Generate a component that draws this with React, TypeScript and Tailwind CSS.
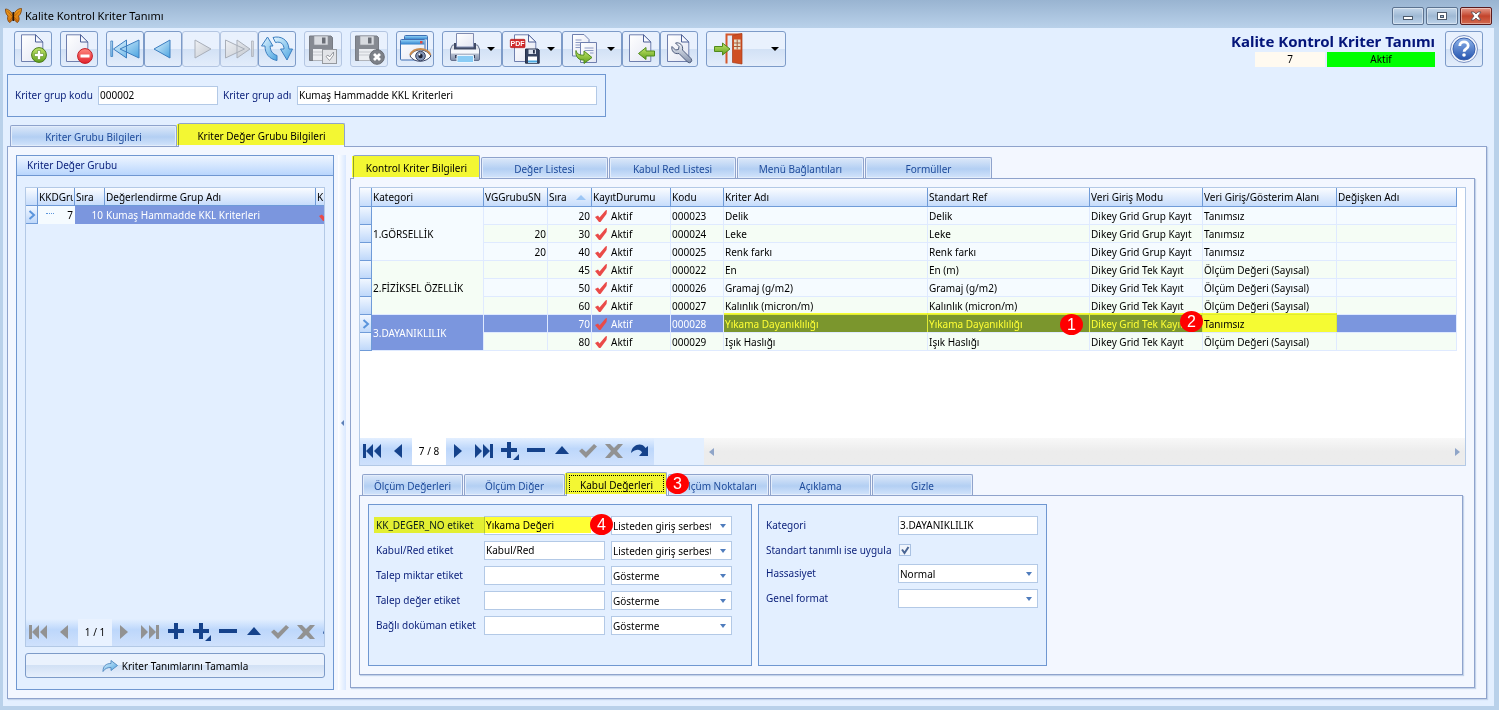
import type { ReactNode } from "react";

type Row = {
  vg: string;
  sira: string;
  kodu: string;
  ad: string;
  ref: string;
  mod: string;
  alan: string;
  group?: { name: string; span: number };
};

const GRUP = "Dikey Grid Grup Kayıt";
const TEK = "Dikey Grid Tek Kayıt";
const OLCUM = "Ölçüm Değeri (Sayısal)";

const rows: Row[] = [
  { vg: "", sira: "20", kodu: "000023", ad: "Delik", ref: "Delik", mod: GRUP, alan: "Tanımsız", group: { name: "1.GÖRSELLİK", span: 3 } },
  { vg: "20", sira: "30", kodu: "000024", ad: "Leke", ref: "Leke", mod: GRUP, alan: "Tanımsız" },
  { vg: "20", sira: "40", kodu: "000025", ad: "Renk farkı", ref: "Renk farkı", mod: GRUP, alan: "Tanımsız" },
  { vg: "", sira: "45", kodu: "000022", ad: "En", ref: "En (m)", mod: TEK, alan: OLCUM, group: { name: "2.FİZİKSEL ÖZELLİK", span: 3 } },
  { vg: "", sira: "50", kodu: "000026", ad: "Gramaj (g/m2)", ref: "Gramaj (g/m2)", mod: TEK, alan: OLCUM },
  { vg: "", sira: "60", kodu: "000027", ad: "Kalınlık (micron/m)", ref: "Kalınlık (micron/m)", mod: TEK, alan: OLCUM },
  { vg: "", sira: "70", kodu: "000028", ad: "Yıkama Dayanıklılığı", ref: "Yıkama Dayanıklılığı", mod: TEK, alan: "Tanımsız", group: { name: "3.DAYANIKLILIK", span: 2 } },
  { vg: "", sira: "80", kodu: "000029", ad: "Işık Haslığı", ref: "Işık Haslığı", mod: TEK, alan: OLCUM },
];

const SELECTED = 6;

const etiketler = [
  { id: "kkdeger", label: "KK_DEGER_NO etiket", value: "Yıkama Değeri", mode: "Listeden giriş serbest" },
  { id: "kabulred", label: "Kabul/Red etiket", value: "Kabul/Red", mode: "Listeden giriş serbest" },
  { id: "miktar", label: "Talep miktar etiket", value: "", mode: "Gösterme" },
  { id: "deger", label: "Talep değer etiket", value: "", mode: "Gösterme" },
  { id: "dokuman", label: "Bağlı doküman etiket", value: "", mode: "Gösterme" },
];

/* ---------- toolbar icons ---------- */

function Gradients() {
  return (
    <svg className="absolute h-0 w-0" aria-hidden="true">
      <defs>
        <linearGradient id="gPage" x1="0" y1="0" x2="1" y2="1">
          <stop offset="0" stopColor="#ffffff" />
          <stop offset="1" stopColor="#e3e6f3" />
        </linearGradient>
        <linearGradient id="gBlue" x1="0" y1="0" x2="1" y2="1">
          <stop offset="0" stopColor="#e4f6ff" />
          <stop offset="1" stopColor="#4aa3e0" />
        </linearGradient>
        <linearGradient id="gGray" x1="0" y1="0" x2="1" y2="1">
          <stop offset="0" stopColor="#f0f2f5" />
          <stop offset="1" stopColor="#c3c8d0" />
        </linearGradient>
        <linearGradient id="gGreen" x1="0" y1="0" x2="0" y2="1">
          <stop offset="0" stopColor="#c3e66a" />
          <stop offset="1" stopColor="#5f9f1c" />
        </linearGradient>
        <linearGradient id="gRed" x1="0" y1="0" x2="0" y2="1">
          <stop offset="0" stopColor="#ff8a80" />
          <stop offset="1" stopColor="#e2202c" />
        </linearGradient>
        <linearGradient id="gBar" x1="0" y1="0" x2="0" y2="1">
          <stop offset="0" stopColor="#8ccdf5" />
          <stop offset="1" stopColor="#2f7fcb" />
        </linearGradient>
        <linearGradient id="gSteel" x1="0" y1="0" x2="0" y2="1">
          <stop offset="0" stopColor="#f4f6fa" />
          <stop offset="1" stopColor="#8290ab" />
        </linearGradient>
        <linearGradient id="gHelp" x1="0" y1="0" x2="0" y2="1">
          <stop offset="0" stopColor="#8fb4ea" />
          <stop offset="1" stopColor="#2453ae" />
        </linearGradient>
        <linearGradient id="gWing" x1="0" y1="0" x2="0" y2="1">
          <stop offset="0" stopColor="#f0a020" />
          <stop offset="1" stopColor="#d4720c" />
        </linearGradient>
      </defs>
    </svg>
  );
}

function Svg({ children }: { children: ReactNode }) {
  return (
    <svg viewBox="0 0 30 30" className="h-[30px] w-[30px] shrink-0 overflow-visible" aria-hidden="true">
      {children}
    </svg>
  );
}

function Page({ x = 3 }: { x?: number }) {
  return (
    <g transform={`translate(${x} 0)`}>
      <path d="M.5.8h14L21.8 8v19.5H.5z" fill="url(#gPage)" stroke="#6f7fae" />
      <path d="M14.5.8V8h7.3z" fill="#f8faff" stroke="#4c5f96" strokeLinejoin="round" />
    </g>
  );
}

const NewIcon = () => (
  <Svg>
    <Page />
    <circle cx="21" cy="21" r="7.4" fill="url(#gGreen)" stroke="#4b7d1c" />
    <path d="M19.5 16.5h3v3h3v3h-3v3h-3v-3h-3v-3h3z" fill="#fff" stroke="#5e8f2a" strokeWidth=".6" />
  </Svg>
);

const DeleteIcon = () => (
  <Svg>
    <Page x={2} />
    <circle cx="21" cy="22" r="7.4" fill="url(#gRed)" stroke="#c41c24" />
    <rect x="16.5" y="20.5" width="9" height="3" fill="#fff" />
  </Svg>
);

const FirstIcon = () => (
  <Svg>
    <path d="M.8 7h1.8v15.5H.8z" fill="url(#gBlue)" stroke="#3c7ec0" strokeWidth=".8" />
    <path d="M16.5 6v18L3.5 15zM29 6v18L10 15z" fill="url(#gBlue)" stroke="#3c7ec0" strokeLinejoin="round" />
  </Svg>
);

const PrevIcon = () => (
  <Svg>
    <path d="M22 6v18L6 15z" fill="url(#gBlue)" stroke="#3c7ec0" strokeLinejoin="round" />
  </Svg>
);

const NextIcon = () => (
  <Svg>
    <path d="M9 6v18l16-9z" fill="url(#gGray)" stroke="#a9afb9" strokeLinejoin="round" />
  </Svg>
);

const LastIcon = () => (
  <Svg>
    <path d="M1.5 6v18l19-9zM13 6v18l13-9z" fill="url(#gGray)" stroke="#a9afb9" strokeLinejoin="round" />
    <path d="M27.5 7h1.8v15.5h-1.8z" fill="url(#gGray)" stroke="#a9afb9" strokeWidth=".8" />
  </Svg>
);

const RefreshIcon = () => (
  <Svg>
    <g fill="url(#gBlue)" stroke="#3c7ec0" strokeLinejoin="round">
      <path d="M5.5 3 11 12H8.2c0 5 2.3 8 6.8 9.5v5C7 25 3 19.5 3 12H-.5z" />
      <path d="M11 3.5C18.5 1.5 26.5 5.500 27 15h3.5L25 26l-6.5-11H22c0-4.5-3-8-8.5-6.5z" />
    </g>
  </Svg>
);

function GrayDisk({ children }: { children: ReactNode }) {
  return (
    <Svg>
      <path d="M1.5 2h21.5l1.5 1.5v23h-23z" fill="#868a92" stroke="#777b83" />
      <rect x="6" y="2" width="14" height="9" fill="#d8dbe0" stroke="#8f939b" strokeWidth=".6" />
      <rect x="14" y="3.5" width="3.5" height="6" fill="#6a6e76" />
      <rect x="5" y="15" width="17" height="11.5" fill="#eceef2" />
      <path d="M5 18h17M5 21h17" stroke="#c5c8ce" />
      {children}
    </Svg>
  );
}

const SaveIcon = () => (
  <GrayDisk>
    <rect x="14.5" y="15.5" width="14" height="14" fill="#e2e4e8" stroke="#95999f" />
    <path d="m18 22.500 2-1.500 1.500 2 4-5v3l-4 5.500z" fill="#fff" stroke="#84888f" strokeWidth=".8" />
  </GrayDisk>
);

const CancelIcon = () => (
  <GrayDisk>
    <circle cx="23" cy="23" r="7.3" fill="#7d8188" stroke="#696d74" />
    <path d="m20 20 6 6m0-6-6 6" stroke="#fff" strokeWidth="2.8" />
  </GrayDisk>
);

const PreviewIcon = () => (
  <Svg>
    <rect x="4.5" y="1.5" width="23" height="18" rx="1" fill="url(#gPage)" stroke="#3f6fb3" />
    <rect x="5" y="2" width="22" height="3.5" fill="url(#gBar)" />
    <rect x=".5" y="5.5" width="24.5" height="20.5" rx="1" fill="url(#gPage)" stroke="#3f6fb3" />
    <rect x="1" y="6" width="23.5" height="4.5" fill="url(#gBar)" />
    <rect x="20" y="7" width="2.5" height="2.5" fill="#e0483c" />
    <path d="M10 22c4-8 16-8 21 0-5 7-17 7-21 0z" fill="#fff" stroke="#3b4668" />
    <path d="M10 21c4-8 17-8 20.5 0" fill="none" stroke="#c98b4e" strokeWidth="1.8" />
    <circle cx="20.5" cy="22" r="4.8" fill="#8394b4" stroke="#35405f" />
    <circle cx="20.5" cy="22" r="2.2" fill="#1b2136" />
    <circle cx="19.5" cy="20.5" r=".9" fill="#fff" />
  </Svg>
);

const PrintIcon = () => (
  <Svg>
    <path d="M2.5 11h25l2 4v10q0 1.5-1.5 1.5H2Q.5 26.5.5 25V15z" fill="url(#gSteel)" stroke="#66728f" />
    <path d="M4 9h22v7H4z" fill="#414b66" />
    <path d="M6.5-.5h17V13h-17z" fill="url(#gPage)" stroke="#7f8bb0" />
    <path d="M1 15.5h28v4H1z" fill="#f6f8fc" />
    <path d="M5 21h20v3H5z" fill="#38415c" />
    <path d="M7 21.5h16.5v7H7z" fill="#8accf5" stroke="#eaf5ff" />
  </Svg>
);

const PdfIcon = () => (
  <Svg>
    <Page x={4} />
    <rect x=".3" y="5.3" width="14.7" height="8.4" rx="1" fill="#d22a2a" stroke="#a81818" strokeWidth=".6" />
    <text x="7.6" y="12.200" textAnchor="middle" fontSize="7" fontWeight="700" fill="#fff" fontFamily="Liberation Sans, sans-serif">
      PDF
    </text>
    <path d="M15.5 15H28l1.2 1.2v13H15.5z" fill="#35425f" stroke="#26304a" />
    <rect x="18.5" y="15.5" width="7.5" height="4.5" fill="#dbe2ee" />
    <rect x="23" y="16" width="1.8" height="3.5" fill="#26304a" />
    <rect x="18" y="22.5" width="9" height="6.5" fill="#fff" />
    <path d="M18 27.5h9" stroke="#4aa7e0" strokeWidth="2" />
  </Svg>
);

const CopyIcon = () => (
  <Svg>
    <path d="M2.5.5h11.5l5 5v16.5H2.5z" fill="url(#gPage)" stroke="#6f7fae" />
    <path d="M5.5 6h6M5.5 8.5h7M5.5 11h5M5.5 13.5h5" stroke="#8d9ac2" />
    <path d="M10.5 8.5h16v20h-16z" fill="url(#gPage)" stroke="#6f7fae" />
    <path d="M14.5 14h9M14.5 16.5h9M20 19h3.5" stroke="#8d9ac2" />
    <path d="M6 16.5c1 4 4 5 8 4.5v-4l8 6.5-8 6v-3.5c-5 .5-9-3-8-9.5z" fill="url(#gGreen)" stroke="#4f8a1c" strokeLinejoin="round" />
  </Svg>
);

const ImportIcon = () => (
  <Svg>
    <Page />
    <path d="m12.5 19.5 7.5-6v3.5h8.5v5H20v3.5z" fill="url(#gGreen)" stroke="#4f8a1c" strokeLinejoin="round" />
  </Svg>
);

const ToolIcon = () => (
  <Svg>
    <Page />
    <path
      d="M8 12.500 11.500 16l3-.5.5-3L11.500 9c4-1 8 2 7 7l8.500 8.500q1.500 2 0 3.500t-3.500 0L15 19.500c-5 1-8-3-7-7z"
      fill="url(#gSteel)"
      stroke="#4d5b7c"
      strokeLinejoin="round"
    />
  </Svg>
);

const ExitIcon = () => (
  <Svg>
    <path d="M12.5 29.5V.5H27v29" fill="#e3edfb" stroke="#d4572b" strokeWidth="2" />
    <path d="m18.5 1.5 9.5-2v30.5l-9.5-1.5z" fill="#cf4f24" stroke="#a83a16" strokeWidth=".7" />
    <path d="M20 5.5h6.5v10H20z" fill="#e8dcc6" />
    <path d="M23.2 5.5v10M20 9h6.5M20 12.5h6.5" stroke="#a65a38" />
    <path d="M.5 12.500h8V9l7.500 6-7.500 6v-3.500h-8z" fill="url(#gGreen)" stroke="#4f8a1c" strokeLinejoin="round" />
  </Svg>
);

const HelpIcon = () => (
  <Svg>
    <circle cx="15" cy="15" r="13.5" fill="#f4f7fd" stroke="#7b92c4" />
    <circle cx="15" cy="15" r="11" fill="url(#gHelp)" stroke="#3c62ad" />
    <path d="M10.8 12c0-5.5 8.400-5.500 8.400-.3 0 3.300-4.100 3.200-4.100 6" fill="none" stroke="#fff" strokeWidth="2.8" />
    <circle cx="15" cy="21" r="1.8" fill="#fff" />
  </Svg>
);

function Butterfly() {
  return (
    <svg viewBox="0 0 17 16" className="h-4 w-[17px]" aria-hidden="true">
      <path d="M8 7C6 3 3 1 .5 1c0 3 .5 5.500 2.500 7-1 2-.5 5 1.500 6.500C7 13.500 8 11 8.200 8.500 8.500 11 10 13.500 12.500 14.500c2-1.500 2-4.500 1-6.500 2-1.500 3-4 3-7.500C13 .5 10 3 8.500 7z" fill="url(#gWing)" stroke="#7a3c06" strokeWidth=".8" />
      <path d="M2 2.500 7 8M15 2.500 9.500 8M4.500 13 7.500 9M12.500 13 9 9" stroke="#9c4a04" strokeWidth=".6" />
      <path d="M8.300 4v9" stroke="#2b1604" strokeWidth="1.600" />
    </svg>
  );
}

function ToolButton({ label, disabled, menu, wide, children }: { label: string; disabled?: boolean; menu?: boolean; wide?: boolean; children: ReactNode }) {
  return (
    <button
      aria-label={label}
      disabled={disabled}
      className={`flex h-9 items-center rounded-[3px] border bg-linear-to-b from-[#e9f1fd] from-50% via-[#d2e1f5] via-50% to-[#e3edfb] ${
        disabled ? "border-[#b4c6e2]" : "border-[#7d9bc8]"
      } ${wide ? "w-20 justify-between pr-1.5 pl-[7px]" : menu ? "w-[60px] justify-between pr-1.5 pl-[7px]" : "w-[38px] justify-center"}`}
    >
      {children}
      {(menu || wide) && (
        <svg viewBox="0 0 8 4" className="h-1 w-2" aria-hidden="true">
          <path d="M0 0h8L4 4z" fill="#000" />
        </svg>
      )}
    </button>
  );
}

/* ---------- shared pieces ---------- */

function Marker({ n, className }: { n: number; className: string }) {
  return (
    <span
      className={`absolute z-20 flex h-[21px] w-[23px] items-center justify-center rounded-[50%] bg-[#ff0000] font-['Liberation_Sans',sans-serif] text-[16px] leading-none text-white ${className}`}
    >
      {n}
    </span>
  );
}

function Highlight({ className }: { className: string }) {
  return <span className={`pointer-events-none absolute z-10 bg-[#ffff33] mix-blend-multiply ${className}`} />;
}

function Tab({ label, active, width, focus, children }: { label: string; active?: boolean; width: string; focus?: boolean; children?: ReactNode }) {
  return (
    <button
      role="tab"
      aria-selected={!!active}
      className={`relative rounded-t-[2px] border border-b-0 border-[#8fa3cc] text-center ${width} ${
        active
          ? "z-[1] -mb-px h-6 bg-[#f3f7ff] text-black"
          : "h-[21px] bg-linear-to-b from-[#dce8f9] from-0% via-[#b3cff3] via-55% to-[#d3e4fb] pt-0.5 text-[#1e4b9b] shadow-[inset_0_0_0_1px_#e3edfb]"
      }`}
    >
      {label}
      {active && <Highlight className="-left-0.5 right-0 top-0 bottom-0.5" />}
      {focus && <span className="absolute inset-x-0.5 top-0.5 bottom-1 z-10 border border-dotted border-black" />}
      {children}
    </button>
  );
}

function Check() {
  return (
    <svg viewBox="0 0 12 12" className="inline h-3 w-3" aria-hidden="true">
      <path d="M0 7l3-1.500 1.500 2L10.500.5l1.500-.5-.5 4L5.500 12H4z" fill="#ea4a48" />
    </svg>
  );
}

const navShapes: Record<string, ReactNode> = {
  first: <path d="M0 2h3v14H0zM3 9l7-7v14zM11 9l7-7v14z" />,
  prev: <path d="M5 9l8-7v14z" />,
  next: <path d="M5 2l8 7-8 7z" />,
  last: <path d="M0 2l7 7-7 7zM8 2l7 7-7 7zM15 2h3v14h-3z" />,
  add: <path d="M7 0h4v6h6v4h-6v6H7v-6H1V6h6z" />,
  append: <path d="M6 0h4v6h6v4h-6v6H6v-6H0V6h6zM18 12v6h-6z" />,
  remove: <path d="M0 6h18v4H0z" />,
  edit: <path d="M9 4l7 8H2z" />,
  post: <path d="M0 9l3-2.500L7 10l8-8 3 2.500L7 16z" />,
  cancel: <path d="M0 2h5l4 4 4-4h5l-6 7 6 7h-5l-4-4-4 4H0l6-7z" />,
  refresh: <path d="M0 11C1 2 11 0 14.500 6L17 4v10H8l3-3.500C9 6.500 4.500 7 0 11z" />,
};

function NavButton({ kind, disabled }: { kind: string; disabled?: boolean }) {
  return (
    <button aria-label={kind} disabled={disabled} className="flex h-full w-[26px] shrink-0 items-center justify-center pr-0.5 pb-0.5">
      <svg viewBox="0 0 18 18" className={`h-[18px] w-[18px] ${disabled ? "fill-[#929292]" : "fill-[#15428b]"}`}>
        {navShapes[kind]}
      </svg>
    </button>
  );
}

const navBg = "bg-linear-to-b from-[#e3efff] to-[#cfe1fc] from-0% via-[#bdd7fb] via-40%";
const headCell =
  "border-r border-b border-[#6f9bd8] bg-linear-to-b from-[#fafcff] to-[#c6dcfb] px-px text-left font-normal whitespace-nowrap overflow-hidden";
const indicator = "border-r border-b border-[#6f9bd8] bg-linear-to-b from-[#f1f7ff] to-[#bfd8fa] p-0";

function Arrow() {
  return (
    <svg viewBox="0 0 8 10" className="mx-auto h-2.5 w-2" aria-hidden="true">
      <path d="m1.5 1 4.5 4-4.5 4" fill="none" stroke="#5b95dc" strokeWidth="2" />
    </svg>
  );
}

function Select({ id, value, width }: { id: string; value: string; width: string }) {
  return (
    <div className={`relative ${width}`}>
      <select id={id} aria-label={id} defaultValue={value} className="block h-[19px] w-full appearance-none overflow-hidden border border-[#b3c9e6] bg-white pr-5 pl-px text-black outline-none">
        <option>{value}</option>
      </select>
      <svg viewBox="0 0 6 4" className="pointer-events-none absolute top-2 right-1.5 h-1 w-1.5" aria-hidden="true">
        <path d="M0 0h6L3 4z" fill="#4f7cbc" />
      </svg>
    </div>
  );
}

const field = "block h-[19px] border border-[#b3c9e6] bg-white px-px pb-0.5 text-black outline-none";

/* ---------- sections ---------- */

function TitleBar() {
  const btn = "flex h-[18px] w-8 items-center justify-center rounded-[2px] border shadow-[inset_0_0_0_1px_rgba(255,255,255,0.4)]";
  return (
    <header className="flex h-7 items-center justify-between bg-linear-to-b from-[#99b4d1] to-[#b9d1ea] pt-1 pr-[7px] pl-[5px]">
      <div className="flex items-center gap-[3px] font-['Noto_Sans',sans-serif] text-[11px] text-black">
        <Butterfly />
        <h1>Kalite Kontrol Kriter Tanımı</h1>
      </div>
      <div className="flex gap-0.5">
        <button aria-label="Simge durumuna küçült" className={`${btn} border-[#5c7390] bg-linear-to-b from-[#c5d7ea] via-[#9fb9d4] via-50% to-[#bdd3ea]`}>
          <span className="mt-1 h-1 w-2.5 border border-[#4d5a6b] bg-white" />
        </button>
        <button aria-label="Ekranı kapla" className={`${btn} border-[#5c7390] bg-linear-to-b from-[#c5d7ea] via-[#9fb9d4] via-50% to-[#bdd3ea]`}>
          <span className="flex h-2 w-2.5 items-center justify-center border border-[#4d5a6b] bg-white">
            <span className="h-[3px] w-1 border border-[#4d5a6b] bg-[#9fb9d4]" />
          </span>
        </button>
        <button aria-label="Kapat" className={`${btn} border-[#5a1a1c] bg-linear-to-b from-[#e39a8c] via-[#c3432b] via-50% to-[#d2694f]`}>
          <svg viewBox="0 0 12 10" className="h-2.5 w-3">
            <path d="M1 1h3l2 2 2-2h3L8 5l3 4H8L6 7 4 9H1l3-4z" fill="#fff" stroke="#5b4a52" strokeWidth=".8" />
          </svg>
        </button>
      </div>
    </header>
  );
}

function Toolbar() {
  return (
    <div className="flex justify-between px-[11px]">
      <div className="flex gap-2">
        <ToolButton label="Yeni"><NewIcon /></ToolButton>
        <ToolButton label="Sil"><DeleteIcon /></ToolButton>
        <div className="flex">
          <ToolButton label="İlk"><FirstIcon /></ToolButton>
          <ToolButton label="Önceki"><PrevIcon /></ToolButton>
          <ToolButton label="Sonraki" disabled><NextIcon /></ToolButton>
          <ToolButton label="Son" disabled><LastIcon /></ToolButton>
          <ToolButton label="Yenile"><RefreshIcon /></ToolButton>
        </div>
        <ToolButton label="Kaydet" disabled><SaveIcon /></ToolButton>
        <ToolButton label="Vazgeç" disabled><CancelIcon /></ToolButton>
        <ToolButton label="Önizleme"><PreviewIcon /></ToolButton>
        <div className="flex">
          <ToolButton label="Yazdır" menu><PrintIcon /></ToolButton>
          <ToolButton label="PDF kaydet" menu><PdfIcon /></ToolButton>
          <ToolButton label="Kopyala" menu><CopyIcon /></ToolButton>
          <ToolButton label="İçeri al"><ImportIcon /></ToolButton>
          <ToolButton label="Ayarlar"><ToolIcon /></ToolButton>
        </div>
        <ToolButton label="Çıkış" wide><ExitIcon /></ToolButton>
      </div>
      <div className="flex gap-2.5">
        <div className="flex flex-col items-end text-center">
          <h2 className="h-[21px] font-['Noto_Sans',sans-serif] text-[15px] leading-[21px] font-bold text-[#04157a]">Kalite Kontrol Kriter Tanımı</h2>
          <div className="flex gap-0.5 leading-[15px] text-black">
            <span className="w-[70px] bg-[#fffaf0]">7</span>
            <span className="w-[108px] bg-[#00ff00]">Aktif</span>
          </div>
        </div>
        <ToolButton label="Yardım"><HelpIcon /></ToolButton>
      </div>
    </div>
  );
}

function LeftGroup() {
  return (
    <section className="flex w-[318px] flex-col border border-[#6f97d1] bg-[#e3efff]">
      <h3 className="h-5 border-b border-[#6f97d1] bg-linear-to-b from-[#eef5ff] to-[#b9d6fd] pl-2.5 leading-[19px]">Kriter Değer Grubu</h3>
      <div className="mx-2 mt-[11px] flex flex-1 flex-col overflow-hidden border border-[#b3c9e6]">
        <table className="w-full table-fixed border-separate border-spacing-0 text-black">
          <colgroup>
            <col className="w-3" />
            <col className="w-[37px]" />
            <col className="w-[30px]" />
            <col />
            <col className="w-2" />
          </colgroup>
          <thead>
            <tr className="h-[18px]">
              <th className={headCell} />
              <th className={headCell}>
                <span className="block overflow-hidden">KKDGru</span>
              </th>
              <th className={headCell}>Sıra</th>
              <th className={headCell}>Değerlendirme Grup Adı</th>
              <th className="overflow-hidden border-b border-[#6f9bd8] bg-linear-to-b from-[#fafcff] to-[#c6dcfb] px-px text-left font-normal">K</th>
            </tr>
          </thead>
          <tbody>
            <tr className="h-[18px]">
              <td className={indicator}><Arrow /></td>
              <td className="bg-[#f5fbff] px-0.5">
                <div className="flex items-center justify-between pl-1.5">
                  <span className="mb-1 w-2 border-t border-dotted border-[#5b95dc]" />7
                </div>
              </td>
              <td className="bg-[#7b96de] px-0.5 text-right text-white">10</td>
              <td className="bg-[#7b96de] px-px text-white">Kumaş Hammadde KKL Kriterleri</td>
              <td className="overflow-hidden bg-[#7b96de] p-0 pl-[3px] leading-none"><Check /></td>
            </tr>
          </tbody>
        </table>
        <div className={`mt-auto flex h-[27px] overflow-hidden ${navBg}`}>
          <NavButton kind="first" disabled />
          <NavButton kind="prev" disabled />
          <span className="w-[34px] shrink-0 bg-[#e9f2ff] text-center leading-[26px] text-black">1 / 1</span>
          <NavButton kind="next" disabled />
          <NavButton kind="last" disabled />
          <NavButton kind="add" />
          <NavButton kind="append" />
          <NavButton kind="remove" />
          <NavButton kind="edit" />
          <NavButton kind="post" disabled />
          <NavButton kind="cancel" disabled />
          <NavButton kind="refresh" />
        </div>
      </div>
      <button className="mx-2 mt-1.5 mb-[11px] flex h-[25px] items-center justify-center gap-1 rounded-[3px] border border-[#7d9bc8] bg-linear-to-b from-[#eaf2fd] from-50% via-[#d2e1f5] via-50% to-[#e6effc] text-black">
        <svg viewBox="0 0 16 12" className="h-3 w-4" aria-hidden="true">
          <path d="M1 11.500C1 6 4 3.500 9 3.500V.5l6.500 5-6.500 5v-3c-4 0-6 1-8 4z" fill="url(#gBlue)" stroke="#4f86bd" strokeWidth=".9" />
        </svg>
        Kriter Tanımlarını Tamamla
      </button>
    </section>
  );
}

function CriteriaGrid() {
  return (
    <div className="flex min-h-[278px] flex-1 flex-col border border-[#b3c9e6] bg-white">
      <div className="pr-2">
        <table className="w-full table-fixed border-separate border-spacing-0 whitespace-nowrap text-black">
          <colgroup>
            <col className="w-3" />
            <col className="w-28" />
            <col className="w-16" />
            <col className="w-11" />
            <col className="w-[79px]" />
            <col className="w-[53px]" />
            <col className="w-51" />
            <col className="w-[162px]" />
            <col className="w-[113px]" />
            <col className="w-[134px]" />
            <col />
          </colgroup>
          <thead>
            <tr className="h-[19px]">
              <th className={headCell} />
              <th className={headCell}>Kategori</th>
              <th className={headCell}>VGGrubuSN</th>
              <th className={headCell}>
                <span className="flex items-center justify-between pr-1">
                  Sıra
                  <svg viewBox="0 0 10 5" className="h-[5px] w-2.5"><path d="M0 5h10L5 0z" fill="#9cc6f5" /></svg>
                </span>
              </th>
              <th className={headCell}>KayıtDurumu</th>
              <th className={headCell}>Kodu</th>
              <th className={headCell}>Kriter Adı</th>
              <th className={headCell}>Standart Ref</th>
              <th className={headCell}>Veri Giriş Modu</th>
              <th className={headCell}>Veri Giriş/Gösterim Alanı</th>
              <th className={headCell}>Değişken Adı</th>
            </tr>
          </thead>
          <tbody>
            {rows.map((r, i) => {
              const sel = i === SELECTED;
              const light = i % 2 ? "bg-[#f5fdf5]" : "bg-[#f5fbff]";
              const bg = sel ? "bg-[#7b96de] text-white" : light;
              const cell = `relative border-r border-b border-[#dfeaff] px-px ${bg}`;
              return (
                <tr key={r.kodu} className="h-[18px]">
                  <td className={indicator}>{sel && <Arrow />}</td>
                  {r.group && (
                    <td rowSpan={r.group.span} className={cell}>{r.group.name}</td>
                  )}
                  <td className={`${cell} text-right`}>{r.vg}</td>
                  <td className={`${cell} text-right`}>{r.sira}</td>
                  <td className={cell}>
                    <span className="flex items-center gap-1 pl-0.5"><Check />Aktif</span>
                  </td>
                  <td className={cell}>{r.kodu}</td>
                  <td className={cell}>
                    {r.ad}
                    {sel && <Highlight className="-top-0.5 left-0 h-[19px] w-[613px]" />}
                  </td>
                  <td className={cell}>
                    {r.ref}
                    {sel && <Marker n={1} className="-top-px right-1.5" />}
                  </td>
                  <td className={cell}>
                    {r.mod}
                    {sel && <Marker n={2} className="-top-1 -right-px" />}
                  </td>
                  <td className={`relative border-r border-b border-[#dfeaff] px-px ${sel ? "bg-[#f5fbff]" : light}`}>{r.alan}</td>
                  <td className={cell} />
                </tr>
              );
            })}
          </tbody>
        </table>
      </div>
      <div className="mt-auto flex h-[27px] bg-[#e3efff]">
        <div className={`flex ${navBg}`}>
          <NavButton kind="first" />
          <NavButton kind="prev" />
          <span className="w-[34px] shrink-0 bg-white text-center leading-[26px] text-black">7 / 8</span>
          <NavButton kind="next" />
          <NavButton kind="last" />
          <NavButton kind="append" />
          <NavButton kind="remove" />
          <NavButton kind="edit" />
          <NavButton kind="post" disabled />
          <NavButton kind="cancel" disabled />
          <NavButton kind="refresh" />
        </div>
        <div className="ml-[50px] flex flex-1 items-center justify-between bg-linear-to-b from-[#f8f8f8] to-[#ececec] to-50% px-[5px]">
          <svg viewBox="0 0 5 8" className="h-2 w-[5px]"><path d="M5 0v8L0 4z" fill="#8fa5c8" /></svg>
          <svg viewBox="0 0 5 8" className="h-2 w-[5px]"><path d="M0 0v8l5-4z" fill="#8fa5c8" /></svg>
        </div>
      </div>
    </div>
  );
}

function DetailForms() {
  return (
    <div className="mr-[3px] border border-[#8fa3cc] p-2 shadow-[1px_1px_1px_#c3d3ea]">
      <div className="flex gap-1.5">
        <section className="flex h-[162px] w-96 flex-col gap-1.5 border border-[#6f97d1] bg-[#e3efff] pt-[11px] pl-[7px]">
          {etiketler.map((e, i) => (
            <div key={e.id} className="relative flex">
              <label htmlFor={e.id} className="w-27 leading-[18px]">{e.label}</label>
              <div className="relative mr-1.5">
                <input id={e.id} defaultValue={e.value} className={`${field} w-[121px]`} />
                {i === 0 && <Marker n={4} className="-top-0.5 -right-2" />}
              </div>
              <Select id={`${e.id}-mod`} value={e.mode} width="w-[121px]" />
              {i === 0 && <Highlight className="top-px -left-0.5 h-4 w-[217px]" />}
            </div>
          ))}
        </section>
        <section className="flex h-[162px] w-[289px] flex-col gap-1.5 border border-[#6f97d1] bg-[#e3efff] pt-[11px] pl-[7px]">
          <div className="flex">
            <label htmlFor="kategori" className="w-33 leading-[18px]">Kategori</label>
            <input id="kategori" defaultValue="3.DAYANIKLILIK" className={`${field} w-35`} />
          </div>
          <div className="flex h-[17px] items-center">
            <label htmlFor="uygula" className="w-33 whitespace-nowrap">Standart tanımlı ise uygula</label>
            <span className="relative ml-px flex">
              <input id="uygula" type="checkbox" defaultChecked className="h-3 w-3 appearance-none border border-[#a9c1e2] bg-[#f0f5fc]" />
              <svg viewBox="0 0 12 12" className="pointer-events-none absolute h-3 w-3">
                <path d="M3 5.500l2.500 3.500L9.500 3" fill="none" stroke="#4a6593" strokeWidth="2" />
              </svg>
            </span>
          </div>
          <div className="flex">
            <label htmlFor="hassasiyet" className="w-33 leading-[18px]">Hassasiyet</label>
            <Select id="hassasiyet" value="Normal" width="w-35" />
          </div>
          <div className="flex">
            <label htmlFor="format" className="w-33 leading-[18px]">Genel format</label>
            <Select id="format" value="" width="w-35" />
          </div>
        </section>
      </div>
    </div>
  );
}

export default function App() {
  return (
    <div className="flex min-h-screen flex-col bg-[#b9d1ea] font-['Noto_Sans',sans-serif] text-[10px] leading-[14px] text-[#0a1f7a]">
      <Gradients />
      <TitleBar />
      <main className="mr-[5px] mb-1 ml-[3px] flex flex-1 flex-col bg-[#e3efff] pt-[3px]">
        <Toolbar />
        <form className="mt-[7px] ml-1 flex h-[43px] w-[599px] items-center border border-[#6f97d1] pl-[7px]">
          <label htmlFor="grup-kodu" className="w-[83px] pb-0.5">Kriter grup kodu</label>
          <input id="grup-kodu" defaultValue="000002" className={`${field} w-30`} />
          <label htmlFor="grup-adi" className="ml-[5px] w-[74px] pb-0.5">Kriter grup adı</label>
          <input id="grup-adi" defaultValue="Kumaş Hammadde KKL Kriterleri" className={`${field} w-75`} />
        </form>

        <div role="tablist" className="mt-1.5 ml-[7px] flex h-[23px] items-end gap-px">
          <Tab label="Kriter Grubu Bilgileri" width="w-[167px]" />
          <Tab label="Kriter Değer Grubu Bilgileri" width="w-[167px]" active />
        </div>
        <div className="mr-[7px] mb-[7px] ml-1 flex flex-1 border border-[#8fa3cc] bg-[#f3f7ff] pt-2 pr-[11px] pb-2 pl-2 shadow-[1px_1px_1px_#c3d3ea]">
          <LeftGroup />
          <div className="flex w-4 items-center justify-center border-x-4 border-[#f3f7ff] bg-linear-to-r from-white to-[#d9e8ff]">
            <svg viewBox="0 0 3 6" className="h-1.5 w-[3px]"><path d="M3 0v6L0 3z" fill="#5c7fb8" /></svg>
          </div>
          <div className="mb-0.5 flex min-w-0 flex-1 flex-col">
            <div role="tablist" className="ml-[3px] flex h-[23px] items-end gap-px">
              <Tab label="Kontrol Kriter Bilgileri" width="w-[127px]" active />
              <Tab label="Değer Listesi" width="w-[127px]" />
              <Tab label="Kabul Red Listesi" width="w-[127px]" />
              <Tab label="Menü Bağlantıları" width="w-[127px]" />
              <Tab label="Formüller" width="w-[127px]" />
            </div>
            <div className="flex flex-1 flex-col border border-[#8fa3cc] pt-2 pr-2 pb-3 pl-2 shadow-[1px_1px_1px_#c3d3ea]">
              <CriteriaGrid />
              <div role="tablist" className="mt-1.5 ml-[3px] flex h-[23px] items-end gap-px">
                <Tab label="Ölçüm Değerleri" width="w-[101px]" />
                <Tab label="Ölçüm Diğer" width="w-[101px]" />
                <Tab label="Kabul Değerleri" width="w-[101px]" active focus />
                <Tab label="Ölçüm Noktaları" width="w-[101px]">
                  <Marker n={3} className="-top-0.5 -left-[3px]" />
                </Tab>
                <Tab label="Açıklama" width="w-[101px]" />
                <Tab label="Gizle" width="w-[101px]" />
              </div>
              <DetailForms />
            </div>
          </div>
        </div>
      </main>
    </div>
  );
}
